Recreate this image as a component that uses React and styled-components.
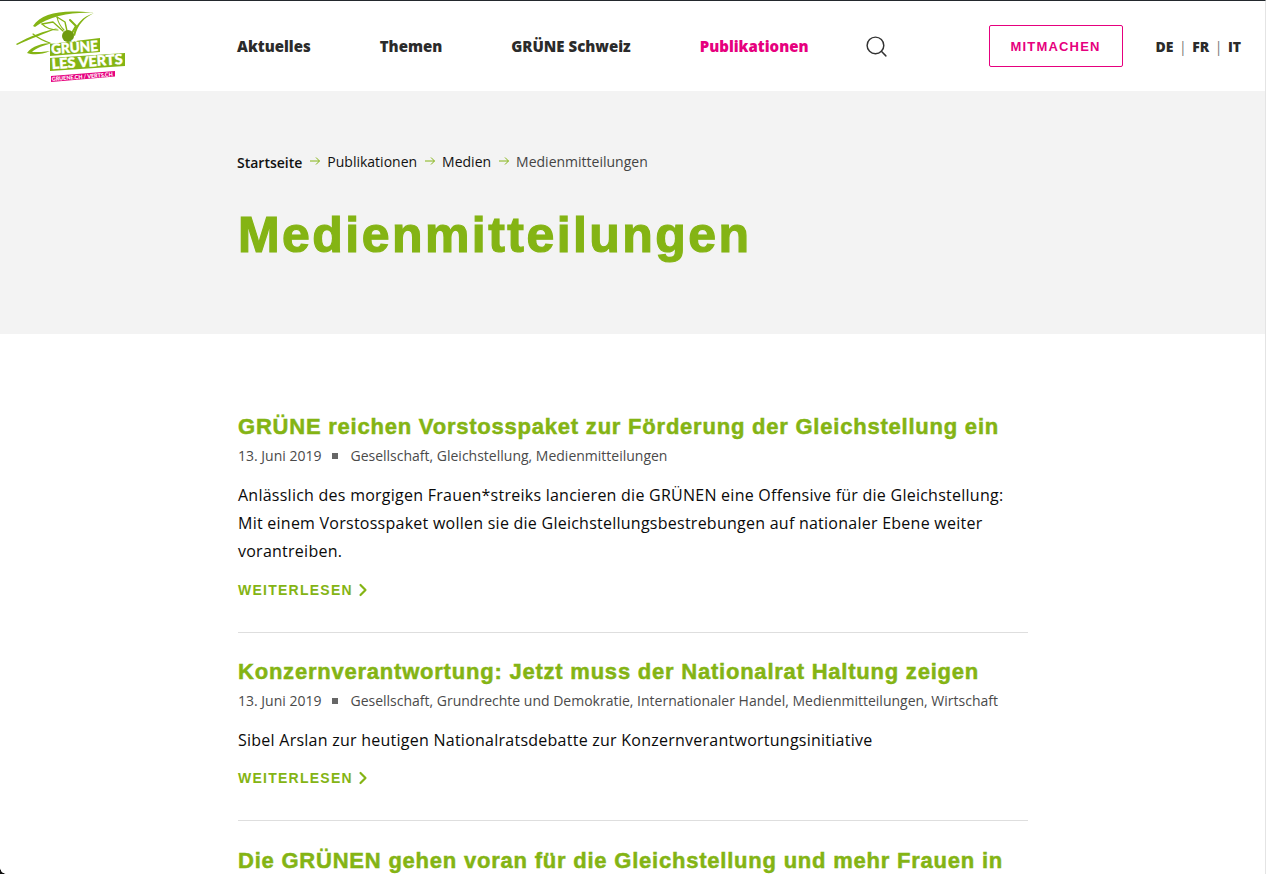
import React from "react"
import styled, { createGlobalStyle } from "styled-components"
import { Search, ChevronRight } from "lucide-react"

const Global = createGlobalStyle`
  html, body {
    margin: 0;
    height: 100%;
    overflow: hidden;
    background: #fff;
  }
  body {
    font-family: "Open Sans", "Liberation Sans", sans-serif;
    color: #000;
  }
`

const GREEN = "#84b414"
const PINK = "#e6007e"

const Page = styled.div`
  position: relative;
  height: 874px;
  overflow: hidden;
  border-top: 1px solid #23282d;
  border-right: 1px solid #e4e4e4;
  box-sizing: border-box;
`
const Corner = styled.div`
  position: absolute;
  left: 0;
  bottom: 0;
  width: 6px;
  height: 6px;
  background: radial-gradient(circle at 100% 0, transparent 5.5px, #111 6px);
`
const Header = styled.header`
  display: flex;
  align-items: center;
  height: 90px;
  padding-left: 16px;
`
const LogoLink = styled.a`
  display: block;
  width: 111px;
  height: 72px;
  margin-right: 110px;
  margin-top: -1px;
`
const Nav = styled.nav`
  display: flex;
  align-items: center;
  gap: 69px;
`
const NavItem = styled.a`
  font-size: 15px;
  font-weight: 800;
  color: ${p => (p.$active ? PINK : "#2b2b2b")};
  white-space: nowrap;
`
const SearchButton = styled.span`
  display: flex;
  margin-left: 55px;
  margin-right: 100px;
  color: #333;
`
const CtaButton = styled.a`
  display: flex;
  align-items: center;
  justify-content: center;
  box-sizing: border-box;
  width: 134px;
  height: 42px;
  border: 1px solid ${PINK};
  border-radius: 2px;
  font-family: "Liberation Sans", Arial, sans-serif;
  font-size: 13px;
  font-weight: 700;
  letter-spacing: 1.2px;
  color: ${PINK};
`
const Lang = styled.div`
  display: flex;
  align-items: center;
  margin-left: 33px;
  font-size: 14px;
  font-weight: 800;
  color: #2b2b2b;
`
const LangSep = styled.span`
  font-weight: 400;
  color: #777;
  margin: 0 5.5px;
`
const Hero = styled.section`
  height: 243px;
  box-sizing: border-box;
  background: #f3f3f3;
  padding: 60px 0 0 238px;
`
const Crumbs = styled.div`
  display: flex;
  align-items: center;
  margin-left: -1px;
  font-size: 14px;
  line-height: 20px;
`
const Crumb = styled.a`
  color: ${p => (p.$current ? "#444" : "#111")};
  font-weight: ${p => (p.$home ? 600 : 400)};
  margin-top: ${p => (p.$home ? "2px" : 0)};
`
const Arrow = styled.svg`
  width: 12px;
  height: 10px;
  margin: 0 6px 2px 7px;
`
const PageTitle = styled.h1`
  margin: 32px 0 0;
  font-family: "Liberation Sans", Arial, sans-serif;
  font-size: 50px;
  line-height: 60px;
  font-weight: 700;
  letter-spacing: 2.45px;
  color: ${GREEN};
  -webkit-text-stroke: 1.2px ${GREEN};
`
const List = styled.main`
  width: 790px;
  margin: 0 0 0 238px;
  padding-top: 79px;
`
const Article = styled.article`
  padding-bottom: 32px;
  margin-bottom: 25px;
  border-bottom: 1px solid #dedede;
  &:nth-child(2) {
    margin-bottom: 26px;
  }
  &:last-child {
    border-bottom: 0;
  }
`
const Title = styled.h2`
  margin: 0;
  font-family: "Liberation Sans", Arial, sans-serif;
  font-size: 22px;
  line-height: 28px;
  font-weight: 700;
  letter-spacing: 0.78px;
  color: ${GREEN};
  -webkit-text-stroke: 0.5px ${GREEN};
`
const Meta = styled.div`
  display: flex;
  align-items: center;
  margin-top: 5px;
  font-size: 14px;
  line-height: 20px;
  color: #4a4a4a;
`
const Dot = styled.span`
  width: 6px;
  height: 6px;
  margin: 0 12px 0 11px;
  background: #666;
`
const Excerpt = styled.p`
  margin: 15px 0 0;
  font-size: 16px;
  line-height: 28px;
  letter-spacing: 0.25px;
  color: #0a0a0a;
`
const More = styled.a`
  display: flex;
  align-items: center;
  margin-top: 14.5px;
  font-family: "Liberation Sans", Arial, sans-serif;
  font-size: 14px;
  line-height: 20px;
  font-weight: 700;
  letter-spacing: 1.25px;
  color: ${GREEN};
`

const Logo = () => (
  <svg viewBox="0 0 111 72" width="111" height="72">
    <g fill={GREEN}>
      <path d="M0 34 C14 26 28 21 42 18 C30 23 14 29 1 35 Z" />
      <path d="M17 16 C26 3 46 -1 78 3 C60 1.5 34 5 19 17 Z" />
      <path d="M78 3 C68 8 62 14 59 26 L57 25 C60 14 66 7 78 3 Z" />
      <path d="M11 43 C16 36 26 33 37 33 C28 35 20 38 16 42 C22 42 28 42 34 41 C26 45 16 45 11 43 Z" />
    </g>
    <g fill="none" stroke={GREEN} strokeLinecap="round" strokeLinejoin="round">
      <path d="M26 14 L37 12 L47 21" strokeWidth="1.3" />
      <path d="M26 14 C30 18 36 20 42 20" strokeWidth="1.1" />
      <path d="M41 7 L49 12 L51 21" strokeWidth="1.4" />
      <path d="M41 7 C42 12 44 16 48 20" strokeWidth="1.1" />
      <path d="M54 10 L60 16 L56 23" strokeWidth="2" />
      <path d="M17 24 C22 28 28 31 34 33" strokeWidth="1.2" />
    </g>
    <circle cx="52" cy="26" r="6" fill="#6f9a10" />
    <path d="M34 34 L84 28 L84 42 L34 46 Z" fill={GREEN} />
    <text x="35.5" y="44" transform="rotate(-4 35 44)" textLength="47" lengthAdjust="spacingAndGlyphs" fontFamily="Lato, sans-serif" fontWeight="900" fontSize="14" stroke="#fff" strokeWidth="0.4" fill="#fff">GRÜNE</text>
    <path d="M34 48 L109 43 L109 56 L34 61 Z" fill={GREEN} />
    <text x="36" y="59" transform="rotate(-4 36 59)" textLength="71" lengthAdjust="spacingAndGlyphs" fontFamily="Lato, sans-serif" fontWeight="900" fontSize="14" stroke="#fff" strokeWidth="0.4" fill="#fff">LES VERTS</text>
    <path d="M35 66 L99 61 L99 66.5 L35 72 Z" fill={PINK} />
    <text x="36" y="71" transform="rotate(-4.5 36 71)" textLength="61" lengthAdjust="spacingAndGlyphs" fontFamily="Lato, sans-serif" fontWeight="900" fontSize="5.6" fill="#fff">GRUENE.CH / VERTS.CH</text>
  </svg>
)

const CrumbArrow = () => (
  <Arrow viewBox="0 0 12 10" fill="none" stroke={GREEN} strokeWidth="1">
    <path d="M1 5 H10.5 M7 1.5 L10.5 5 L7 8.5" />
  </Arrow>
)

const articles = [
  {
    title: "GRÜNE reichen Vorstosspaket zur Förderung der Gleichstellung ein",
    date: "13. Juni 2019",
    tags: "Gesellschaft, Gleichstellung, Medienmitteilungen",
    text: "Anlässlich des morgigen Frauen*streiks lancieren die GRÜNEN eine Offensive für die Gleichstellung: Mit einem Vorstosspaket wollen sie die Gleichstellungsbestrebungen auf nationaler Ebene weiter vorantreiben.",
  },
  {
    title: "Konzernverantwortung: Jetzt muss der Nationalrat Haltung zeigen",
    date: "13. Juni 2019",
    tags: "Gesellschaft, Grundrechte und Demokratie, Internationaler Handel, Medienmitteilungen, Wirtschaft",
    text: "Sibel Arslan zur heutigen Nationalratsdebatte zur Konzernverantwortungsinitiative",
  },
  {
    title: "Die GRÜNEN gehen voran für die Gleichstellung und mehr Frauen in die Politik",
    date: "13. Juni 2019",
    tags: "Gesellschaft, Gleichstellung, Medienmitteilungen",
    text: "",
  },
]

export default function App() {
  return (
    <Page>
      <Global />
      <Header>
        <LogoLink><Logo /></LogoLink>
        <Nav>
          <NavItem>Aktuelles</NavItem>
          <NavItem>Themen</NavItem>
          <NavItem>GRÜNE Schweiz</NavItem>
          <NavItem $active>Publikationen</NavItem>
        </Nav>
        <SearchButton><Search size={25} strokeWidth={1.4} /></SearchButton>
        <CtaButton>MITMACHEN</CtaButton>
        <Lang>
          DE<LangSep>|</LangSep>FR<LangSep>|</LangSep>IT
        </Lang>
      </Header>
      <Hero>
        <Crumbs>
          <Crumb $home>Startseite</Crumb>
          <CrumbArrow />
          <Crumb>Publikationen</Crumb>
          <CrumbArrow />
          <Crumb>Medien</Crumb>
          <CrumbArrow />
          <Crumb $current>Medienmitteilungen</Crumb>
        </Crumbs>
        <PageTitle>Medienmitteilungen</PageTitle>
      </Hero>
      <List>
        {articles.map(a => (
          <Article key={a.title}>
            <Title>{a.title}</Title>
            <Meta>
              {a.date}
              <Dot />
              {a.tags}
            </Meta>
            <Excerpt>{a.text}</Excerpt>
            <More>WEITERLESEN <ChevronRight size={20} strokeWidth={2.6} /></More>
          </Article>
        ))}
      </List>
      <Corner />
    </Page>
  )
}
